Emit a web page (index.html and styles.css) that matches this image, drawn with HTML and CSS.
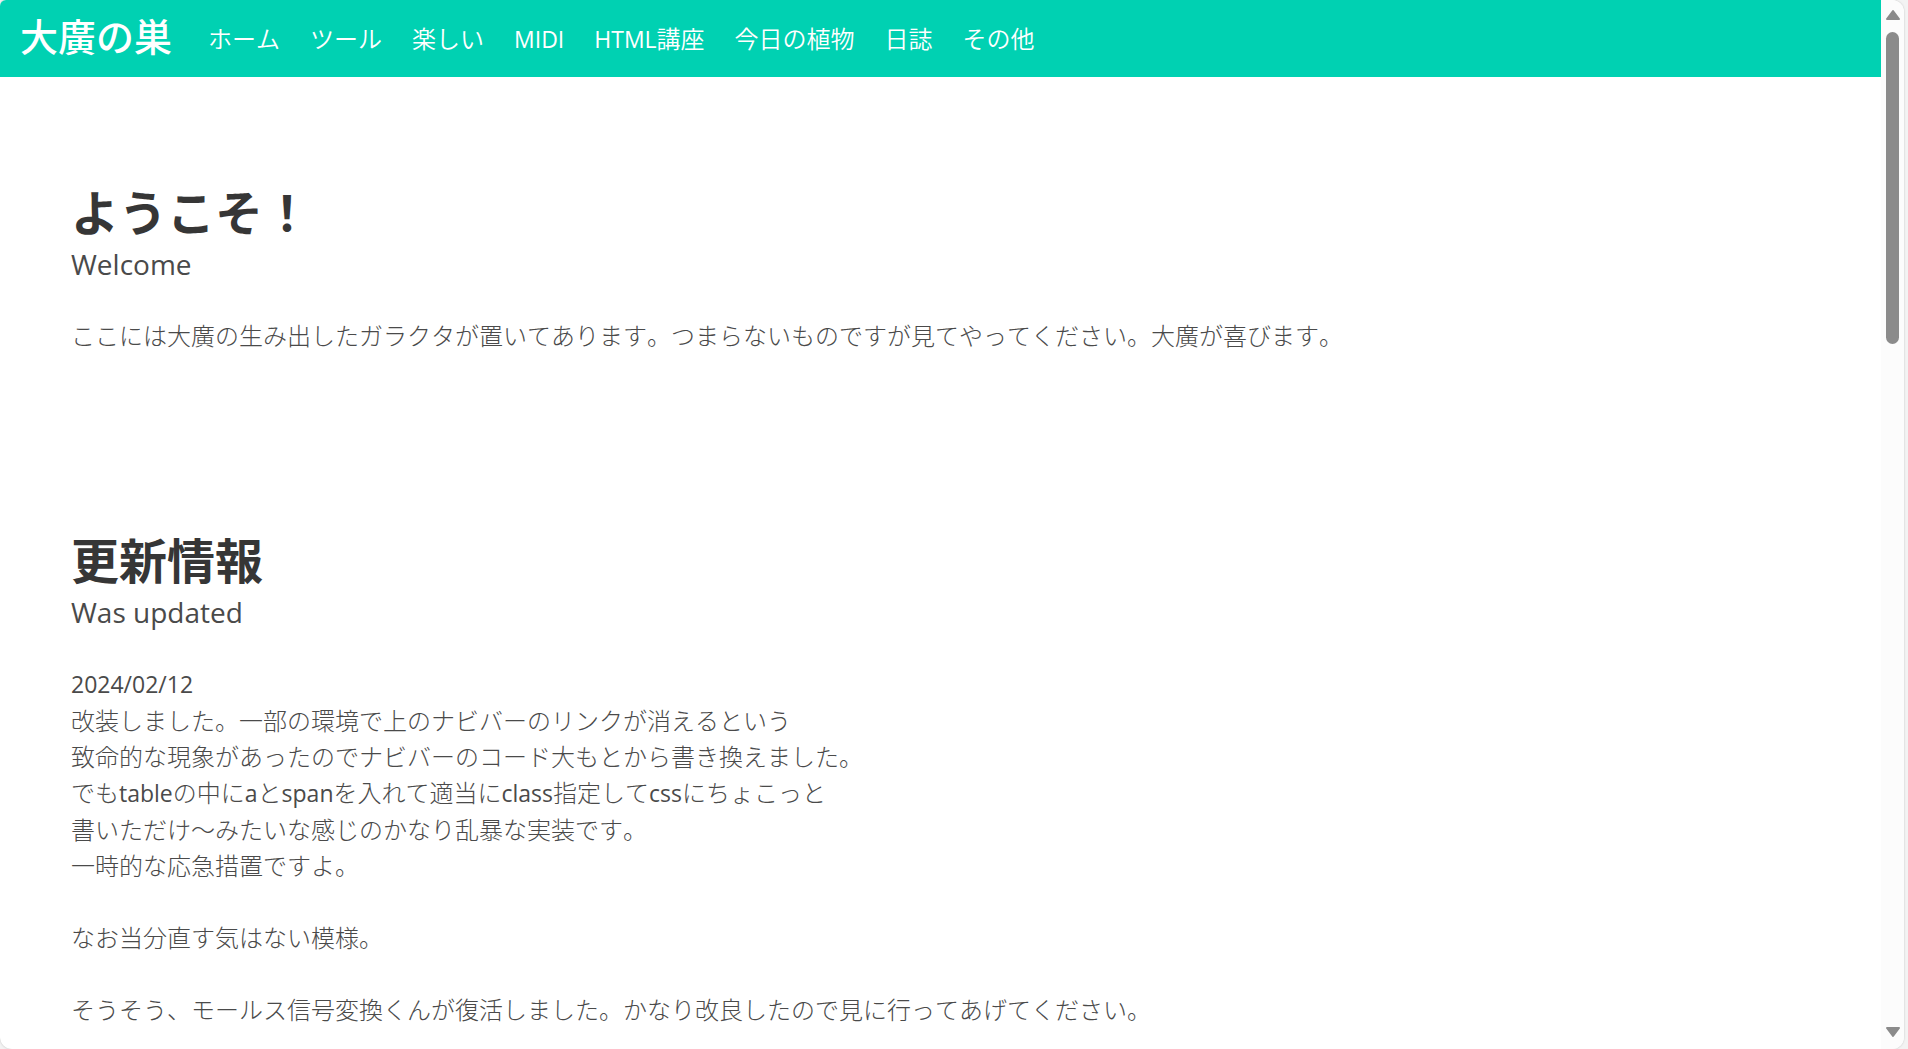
FILE: index.html
```html
<!DOCTYPE html>
<html lang="ja">
<head>
<meta charset="utf-8">
<meta name="viewport" content="width=device-width, initial-scale=1">
<title>大廣の巣</title>
<link rel="stylesheet" href="styles.css">
</head>
<body>
<div class="window">
  <div class="page">
    <header class="navbar">
      <a class="brand" href="#">大廣の巣</a>
      <nav class="menu">
        <a href="#">ホーム</a>
        <a href="#">ツール</a>
        <a href="#">楽しい</a>
        <a href="#"><span class="latin">MIDI</span></a>
        <a href="#"><span class="latin">HTML</span>講座</a>
        <a href="#">今日の植物</a>
        <a href="#">日誌</a>
        <a href="#">その他</a>
      </nav>
    </header>
    <main>
      <section class="section">
        <h1 class="title">ようこそ！</h1>
        <p class="subtitle">Welcome</p>
        <p>ここには大廣の生み出したガラクタが置いてあります。つまらないものですが見てやってください。大廣が喜びます。</p>
      </section>
      <section class="section">
        <h1 class="title">更新情報</h1>
        <p class="subtitle">Was updated</p>
        <p><time class="latin" datetime="2024-02-12">2024/02/12</time><br>
        改装しました。一部の環境で上のナビバーのリンクが消えるという<br>
        致命的な現象があったのでナビバーのコード大もとから書き換えました。<br>
        でも<span class="latin">table</span>の中に<span class="latin">a</span>と<span class="latin">span</span>を入れて適当に<span class="latin">class</span>指定して<span class="latin">css</span>にちょこっと<br>
        書いただけ～みたいな感じのかなり乱暴な実装です。<br>
        一時的な応急措置ですよ。<br>
        <br>
        なお当分直す気はない模様。<br>
        <br>
        そうそう、モールス信号変換くんが復活しました。かなり改良したので見に行ってあげてください。</p>
      </section>
    </main>
  </div>
  <div class="scrollbar">
    <button class="arrow" type="button" aria-label="上へスクロール"><svg viewBox="0 0 16 12"><path d="M8 2 14 10H2Z"/></svg></button>
    <div class="track"><div class="thumb" style="height:31.7%"></div></div>
    <button class="arrow" type="button" aria-label="下へスクロール"><svg viewBox="0 0 16 12"><path d="M8 10 2 2H14Z"/></svg></button>
  </div>
</div>
</body>
</html>
```
FILE: styles.css
```css
* { box-sizing: border-box; }

body {
  margin: 0;
  background: #f3f3f3;
  color: #4a4a4a;
  font: 300 24px/36px "Noto Sans CJK JP", sans-serif;
  font-kerning: none;
}

.window {
  display: flex;
  height: 100vh;
  margin-right: 4px;
  overflow: hidden;
  background: #fff;
  border-radius: 6px 12px 12px 12px;
  box-shadow: 0 0 2px #bbb;
}

.page {
  flex: 1;
  min-width: 0;
  overflow: hidden;
}

.navbar {
  display: flex;
  align-items: center;
  min-height: 77px;
  padding: 0 20px;
  gap: 36px;
  background: #00d1b2;
}

.navbar a {
  color: #fff;
  text-decoration: none;
  white-space: nowrap;
}

.navbar .brand {
  padding-bottom: 8px;
  font-size: 38px;
  font-weight: 500;
}

.menu {
  display: flex;
  flex-wrap: wrap;
  gap: 30px;
  font-weight: 350;
}

.latin {
  font-family: "Open Sans", sans-serif;
  font-size: 23px;
  font-weight: 400;
}

.section {
  padding: 106px 71px 72px;
}

.title {
  margin: 0;
  color: #363636;
  font-size: 48px;
  font-weight: 700;
  line-height: 54px;
}

.subtitle {
  margin: 0 0 32px;
  padding-top: 6px;
  font: 400 28px/42px "Open Sans", sans-serif;
}

.section p:last-child { margin: 0; }

.scrollbar {
  display: flex;
  flex-direction: column;
  flex: none;
  width: 23px;
  background: #fcfcfc;
}

.arrow {
  display: flex;
  align-items: center;
  justify-content: center;
  height: 32px;
  padding: 0 0 2px;
  border: 0;
  background: none;
}

.arrow svg {
  width: 16px;
  height: 12px;
  fill: #8b8b8b;
  stroke: #8b8b8b;
  stroke-width: 2;
  stroke-linejoin: round;
}

.track {
  flex: 1;
  padding: 0 5px;
}

.thumb {
  border-radius: 7px;
  background: #8b8b8b;
}
```
